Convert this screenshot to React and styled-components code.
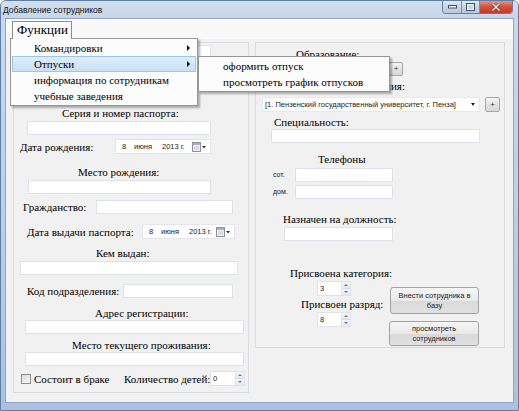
import React from 'react';
import styled, { createGlobalStyle } from 'styled-components';

const GlobalStyle = createGlobalStyle`
  html, body { margin: 0; padding: 0; }
  body { width: 519px; height: 411px; overflow: hidden; background: #fff; }
  * { box-sizing: border-box; }
`;

const serif = `"Liberation Serif", "Times New Roman", serif`;
const sans = `"Liberation Sans", Arial, sans-serif`;

// WINDOW CHROME
const Window = styled.div`
  width: 519px;
  height: 411px;
  display: flex;
  flex-direction: column;
  background: linear-gradient(180deg, #cbd9ec 0%, #b9cde6 60%, #aac1df 100%);
  border: 1px solid #5f7ea6;
  border-radius: 6px 6px 0 0;
  overflow: hidden;
`;

const TitleBar = styled.div`
  height: 18px;
  display: flex;
  align-items: center;
  padding: 0 5px 0 2px;
  background: linear-gradient(180deg, #d3dfee 0%, #c6d5e9 100%);
`;

const Title = styled.span`
  font: 8.5px/12px ${sans};
  color: #111;
  flex: 1;
`;

const Controls = styled.div`
  align-self: flex-start;
  margin-top: -1px;
  display: flex;
  height: 14px;
  border: 1px solid #6b7f99;
  border-top: none;
  border-radius: 0 0 4px 4px;
  overflow: hidden;
`;

const CtrlButton = styled.div`
  width: ${p => p.$w}px;
  height: 100%;
  display: flex;
  align-items: center;
  justify-content: center;
  border-left: ${p => (p.$first ? 'none' : '1px solid #7d8fa6')};
  background: ${p =>
    p.$close
      ? 'linear-gradient(180deg, #e8a493 0%, #d4533f 50%, #c03a26 100%)'
      : 'linear-gradient(180deg, #e6edf6 0%, #c9d6e7 50%, #b7c8de 100%)'};
`;

const Frame = styled.div`
  flex: 1;
  display: flex;
  padding: 0 5px 8px;
`;

const Client = styled.div`
  position: relative;
  flex: 1;
  display: flex;
  flex-direction: column;
  background: #f1f1f1;
  box-shadow: 0 0 0 1px #8fa6c6;
`;

// MENU
const MenuStrip = styled.div`
  height: 20px;
  padding: 2px 0 0 6px;
  background: #f9f9f9;
`;

const MenuTab = styled.div`
  position: relative;
  z-index: 6;
  width: 60px;
  height: 18px;
  padding-left: 4px;
  font: 13px/16px ${serif};
  color: #000;
  background: #fcfcfc;
  border: 1px solid #8d8d8d;
  border-bottom: none;
`;

const Dropdown = styled.div`
  position: absolute;
  z-index: 5;
  left: ${p => p.$x}px;
  top: ${p => p.$y}px;
  width: ${p => p.$w}px;
  padding: 1px;
  background: #fcfcfc;
  border: 1px solid #979797;
  box-shadow: 2px 2px 2px rgba(0, 0, 0, 0.3);
`;

const MenuItem = styled.div`
  position: relative;
  height: 16px;
  display: flex;
  align-items: center;
  padding-left: ${p => p.$pl}px;
  font: 11px/14px ${serif};
  color: #000;
  white-space: nowrap;
  border: 1px solid ${p => (p.$active ? '#99c6ee' : 'transparent')};
  background: ${p => (p.$active ? 'linear-gradient(180deg, #e0eefc 0%, #c9e0f7 100%)' : 'transparent')};
`;

const SubArrow = styled.span`
  position: absolute;
  right: 5px;
  top: 4px;
  width: 0;
  height: 0;
  border-top: 3px solid transparent;
  border-bottom: 3px solid transparent;
  border-left: 3px solid #000;
`;

// FORM
const Groups = styled.div`
  display: flex;
  align-items: flex-start;
  gap: 6px;
  margin-top: 3px;
  padding-left: 7px;
`;

const Group = styled.div`
  width: ${p => p.$w}px;
  height: ${p => p.$h}px;
  display: flex;
  flex-direction: column;
  border: 1px solid #d8dce1;
`;

const Row = styled.div`
  display: flex;
  align-items: center;
  margin-top: ${p => p.$mt || 0}px;
  padding-left: ${p => p.$pl || 0}px;
  gap: ${p => p.$gap || 0}px;
  width: ${p => (p.$w ? `${p.$w}px` : 'auto')};
  justify-content: ${p => (p.$end ? 'flex-end' : 'flex-start')};
`;

const Column = styled.div`
  display: flex;
  flex-direction: column;
  width: ${p => (p.$w ? `${p.$w}px` : 'auto')};
  padding-top: ${p => p.$pt || 0}px;
`;

const Label = styled.span`
  flex: none;
  font: 11px/14px ${serif};
  color: #000;
  white-space: nowrap;
  width: ${p => (p.$w ? `${p.$w}px` : 'auto')};
`;

const SmallLabel = styled.span`
  flex: none;
  font: 7px/10px ${sans};
  color: #222;
  width: ${p => p.$w}px;
`;

const TextBox = styled.div`
  flex: none;
  width: ${p => p.$w}px;
  height: ${p => p.$h || 14}px;
  background: #fff;
  border: 1px solid #dde2e8;
`;

const Picker = styled.div`
  flex: none;
  width: ${p => p.$w}px;
  height: 15px;
  display: flex;
  align-items: center;
  padding: 0 4px 0 6px;
  background: #fff;
  border: 1px solid #e2e6ea;
  font: 7.5px/10px ${sans};
  color: #222;
`;

const PickerPart = styled.span`
  width: ${p => (p.$w ? `${p.$w}px` : 'auto')};
  white-space: nowrap;
`;

const PickerIcon = styled.span`
  margin-left: auto;
  display: flex;
`;

const Combo = styled.div`
  flex: none;
  width: ${p => p.$w}px;
  height: 15px;
  display: flex;
  align-items: center;
  padding: 0 4px 0 2px;
  background: #fff;
  border: 1px solid #e6e9ee;
  font: 7.5px/10px ${sans};
  color: #222;
  white-space: nowrap;
`;

const ComboText = styled.span`
  flex: 1;
  overflow: hidden;
`;

const ComboArrow = styled.span`
  width: 0;
  height: 0;
  border-left: 2.5px solid transparent;
  border-right: 2.5px solid transparent;
  border-top: 3px solid #222;
`;

const PlusButton = styled.div`
  flex: none;
  width: ${p => p.$s}px;
  height: ${p => p.$s}px;
  display: flex;
  align-items: center;
  justify-content: center;
  font: 8px/8px ${sans};
  color: #333;
  border: 1px solid #a8a8a8;
  border-radius: 2px;
  background: linear-gradient(180deg, #f6f6f6 0%, #e2e2e2 55%, #d6d6d6 100%);
`;

const Numeric = styled.div`
  flex: none;
  width: ${p => p.$w}px;
  height: 15px;
  display: flex;
  background: #fff;
  border: 1px solid #dfe3e8;
  font: 7.5px/13px ${sans};
  color: #222;
`;

const NumValue = styled.span`
  flex: 1;
  padding-left: 2px;
`;

const Spin = styled.div`
  width: 9px;
  display: flex;
  flex-direction: column;
  border-left: 1px solid #e0e4ea;
`;

const SpinHalf = styled.div`
  flex: 1;
  display: flex;
  align-items: center;
  justify-content: center;
  background: linear-gradient(180deg, #f4f7fb 0%, #e3e9f1 100%);
  border-bottom: ${p => (p.$top ? '1px solid #d3dbe6' : 'none')};
`;

const SpinTri = styled.span`
  width: 0;
  height: 0;
  border-left: 2px solid transparent;
  border-right: 2px solid transparent;
  ${p => (p.$up ? 'border-bottom: 2px solid #6a7a90;' : 'border-top: 2px solid #6a7a90;')}
`;

const CheckBox = styled.span`
  flex: none;
  width: 10px;
  height: 10px;
  border: 1px solid #8f8f8f;
  background: linear-gradient(135deg, #dcdcdc 0%, #f7f7f7 100%);
`;

const Button = styled.div`
  width: ${p => p.$w}px;
  height: ${p => p.$h}px;
  margin-top: ${p => p.$mt || 0}px;
  margin-left: ${p => p.$ml || 0}px;
  display: flex;
  align-items: center;
  justify-content: center;
  text-align: center;
  padding: 0 6px;
  font: 7.5px/10px ${sans};
  color: #222;
  border: 1px solid #a3a3a3;
  border-radius: 3px;
  background: linear-gradient(180deg, #f5f5f5 0%, #e9e9e9 50%, #d9d9d9 51%, #e0e0e0 100%);
`;

const CalendarIcon = () => (
  <svg width="14" height="10" viewBox="0 0 14 10">
    <rect x="0.5" y="0.5" width="8" height="9" fill="#eef0f3" stroke="#8b939e" />
    <rect x="1" y="1" width="7" height="2" fill="#a8b2bf" />
    <path d="M2 5h5M2 7h5" stroke="#c3c9d1" strokeWidth="1" />
    <path d="M10 4h4l-2 2.5z" fill="#333" />
  </svg>
);

const DatePicker = ({ w }) => (
  <Picker $w={w}>
    <PickerPart $w={12}>8</PickerPart>
    <PickerPart $w={28}>июня</PickerPart>
    <PickerPart>2013 г.</PickerPart>
    <PickerIcon>
      <CalendarIcon />
    </PickerIcon>
  </Picker>
);

const NumericBox = ({ value, w }) => (
  <Numeric $w={w}>
    <NumValue>{value}</NumValue>
    <Spin>
      <SpinHalf $top>
        <SpinTri $up />
      </SpinHalf>
      <SpinHalf>
        <SpinTri />
      </SpinHalf>
    </Spin>
  </Numeric>
);

const MinIcon = () => (
  <svg width="9" height="5" viewBox="0 0 9 5">
    <rect x="0.5" y="1.5" width="8" height="2.5" fill="#fff" stroke="#3d4f68" strokeWidth="1" />
  </svg>
);

const MaxIcon = () => (
  <svg width="9" height="8" viewBox="0 0 9 8">
    <rect x="0.5" y="0.5" width="8" height="7" fill="none" stroke="#3d4f68" strokeWidth="1" />
    <rect x="1.5" y="1.5" width="6" height="5" fill="none" stroke="#fff" strokeWidth="1" />
  </svg>
);

const CloseIcon = () => (
  <svg width="10" height="8" viewBox="0 0 10 8">
    <path d="M1.5 0.5l7 7M8.5 0.5l-7 7" stroke="#5a1a12" strokeWidth="2.6" />
    <path d="M1.5 0.5l7 7M8.5 0.5l-7 7" stroke="#fff" strokeWidth="1.5" />
  </svg>
);

const App = () => (
  <>
    <GlobalStyle />
    <Window>
      <TitleBar>
        <Title>Добавление сотрудников</Title>
        <Controls>
          <CtrlButton $w={18} $first>
            <MinIcon />
          </CtrlButton>
          <CtrlButton $w={18}>
            <MaxIcon />
          </CtrlButton>
          <CtrlButton $w={33} $close>
            <CloseIcon />
          </CtrlButton>
        </Controls>
      </TitleBar>

      <Frame>
        <Client>
          <MenuStrip>
            <MenuTab>Функции</MenuTab>
          </MenuStrip>

          <Groups>
            {/* left column: passport data */}
            <Group $w={236} $h={351}>
              <Row $mt={2} $pl={13}>
                <TextBox $w={184} />
              </Row>
              <Row $mt={47} $pl={48}>
                <Label>Серия и номер паспорта:</Label>
              </Row>
              <Row $mt={1} $pl={13}>
                <TextBox $w={184} />
              </Row>
              <Row $mt={4} $pl={6}>
                <Label $w={95}>Дата рождения:</Label>
                <DatePicker w={96} />
              </Row>
              <Row $mt={11} $pl={64}>
                <Label>Место рождения:</Label>
              </Row>
              <Row $mt={1} $pl={14}>
                <TextBox $w={183} />
              </Row>
              <Row $mt={6} $pl={9}>
                <Label $w={73}>Гражданство:</Label>
                <TextBox $w={137} />
              </Row>
              <Row $mt={10} $pl={13}>
                <Label $w={115}>Дата выдачи паспорта:</Label>
                <DatePicker w={93} />
              </Row>
              <Row $mt={7} $pl={82}>
                <Label>Кем выдан:</Label>
              </Row>
              <Row $mt={1} $pl={6}>
                <TextBox $w={218} />
              </Row>
              <Row $mt={9} $pl={13}>
                <Label $w={96}>Код подразделения:</Label>
                <TextBox $w={110} />
              </Row>
              <Row $mt={8} $pl={81}>
                <Label>Адрес регистрации:</Label>
              </Row>
              <Row $pl={11}>
                <TextBox $w={219} />
              </Row>
              <Row $mt={4} $pl={58}>
                <Label>Место текущего проживания:</Label>
              </Row>
              <Row $pl={11}>
                <TextBox $w={219} />
              </Row>
              <Row $mt={5} $pl={7} $gap={3}>
                <CheckBox />
                <Label $w={87}>Состоит в браке</Label>
                <Row $gap={0}>
                  <Label $w={86}>Количество детей:</Label>
                  <NumericBox value="0" w={35} />
                </Row>
              </Row>
            </Group>

            {/* right column: education and position */}
            <Group $w={250} $h={306}>
              <Row $mt={4} $pl={40}>
                <Label>Образование:</Label>
              </Row>
              <Row $pl={6} $gap={5}>
                <Combo $w={122}>
                  <ComboText>Высшее</ComboText>
                  <ComboArrow />
                </Combo>
                <PlusButton $s={14}>+</PlusButton>
              </Row>
              <Row $mt={3} $w={149} $end>
                <Label>Наименование учебного заведения:</Label>
              </Row>
              <Row $mt={4} $pl={6} $gap={5}>
                <Combo $w={218}>
                  <ComboText>[1. Пензенский государственный университет, г. Пенза]</ComboText>
                  <ComboArrow />
                </Combo>
                <PlusButton $s={15}>+</PlusButton>
              </Row>
              <Row $mt={3} $pl={18}>
                <Label>Специальность:</Label>
              </Row>
              <Row $pl={15}>
                <TextBox $w={209} />
              </Row>
              <Row $mt={9} $pl={62}>
                <Label>Телефоны</Label>
              </Row>
              <Row $mt={2} $pl={17}>
                <SmallLabel $w={22}>сот.</SmallLabel>
                <TextBox $w={98} />
              </Row>
              <Row $mt={3} $pl={17}>
                <SmallLabel $w={22}>дом.</SmallLabel>
                <TextBox $w={98} />
              </Row>
              <Row $mt={13} $pl={27}>
                <Label>Назначен на должность:</Label>
              </Row>
              <Row $mt={1} $pl={28}>
                <TextBox $w={109} />
              </Row>
              <Row $mt={5}>
                <Column $w={133}>
                  <Row $pl={34}>
                    <Label>Присвоена категория:</Label>
                  </Row>
                  <Row $mt={1} $pl={61}>
                    <NumericBox value="3" w={34} />
                  </Row>
                  <Row $mt={1} $pl={45}>
                    <Label>Присвоен разряд:</Label>
                  </Row>
                  <Row $mt={1} $pl={61}>
                    <NumericBox value="8" w={34} />
                  </Row>
                </Column>
                <Column>
                  <Button $w={89} $h={27} $mt={41} $ml={1}>Внести сотрудника в базу</Button>
                  <Button $w={90} $h={25} $mt={7}>просмотреть сотрудников</Button>
                </Column>
              </Row>
            </Group>
          </Groups>

          {/* open menu: Функции > Отпуски */}
          <Dropdown $x={4} $y={19} $w={188}>
            <MenuItem $pl={21}>
              Командировки
              <SubArrow />
            </MenuItem>
            <MenuItem $pl={21} $active>
              Отпуски
              <SubArrow />
            </MenuItem>
            <MenuItem $pl={21}>информация по сотрудникам</MenuItem>
            <MenuItem $pl={21}>учебные заведения</MenuItem>
          </Dropdown>
          <Dropdown $x={192} $y={37} $w={192}>
            <MenuItem $pl={22}>оформить отпуск</MenuItem>
            <MenuItem $pl={22}>просмотреть график отпусков</MenuItem>
          </Dropdown>
        </Client>
      </Frame>
    </Window>
  </>
);

export default App;
